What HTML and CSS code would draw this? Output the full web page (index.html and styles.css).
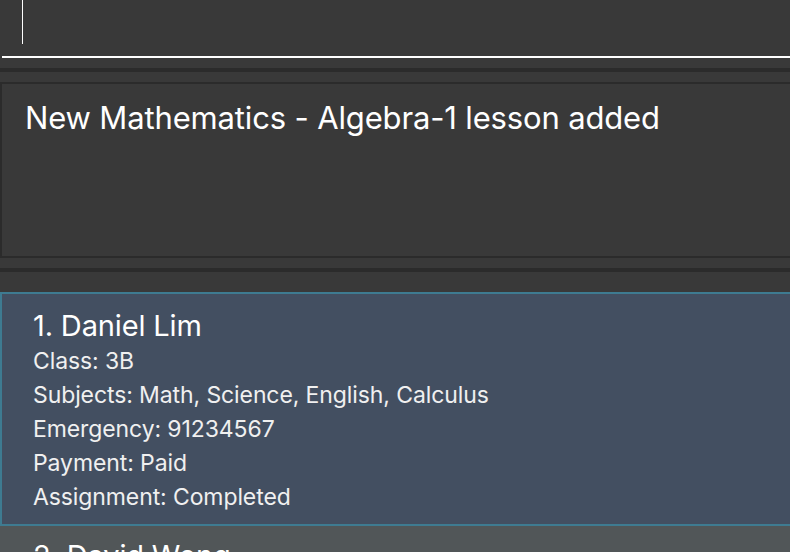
FILE: index.html
```html
<!DOCTYPE html>
<html>
<head>
<meta charset="utf-8">
<link rel="stylesheet" href="styles.css">
</head>
<body>
<div class="app">
  <div class="command">
    <div class="command-input"><span class="caret"></span></div>
  </div>
  <div class="gap10"></div>
  <div class="band"></div>
  <div class="gap10"></div>
  <div class="result">
    <div class="result-text">New Mathematics - Algebra-1 lesson added</div>
  </div>
  <div class="gap10"></div>
  <div class="band"></div>
  <div class="gap20"></div>
  <div class="list">
    <div class="card selected">
      <div class="card-title">1. Daniel Lim</div>
      <div class="card-line">Class: 3B</div>
      <div class="card-line">Subjects: Math, Science, English, Calculus</div>
      <div class="card-line">Emergency: 91234567</div>
      <div class="card-line">Payment: Paid</div>
      <div class="card-line">Assignment: Completed</div>
    </div>
    <div class="card">
      <div class="card-title">2. David Wong</div>
    </div>
  </div>
</div>
</body>
</html>
```
FILE: styles.css
```css
html, body {
  margin: 0;
  padding: 0;
  background: #393939;
  overflow: hidden;
  height: 552px;
}
body {
  font-family: Inter, "Noto Sans", sans-serif;
  color: #ffffff;
}
.app {
  display: flex;
  flex-direction: column;
  width: 790px;
}
.command {
  height: 58px;
  padding-left: 2px;
}
.command-input {
  height: 56px;
  border-bottom: 2px solid #ffffff;
  padding-left: 20px;
}
.caret {
  display: block;
  width: 1px;
  height: 44px;
  background: #ffffff;
}
.gap10 { height: 10px; flex: none; }
.gap20 { height: 20px; flex: none; }
.band {
  height: 4px;
  flex: none;
  background: #2b2b2b;
}
.result {
  height: 156px;
  flex: none;
  border: 2px solid #2b2b2b;
  border-right: none;
  padding: 16px 0 0 23px;
}
.result-text {
  font-size: 31px;
  line-height: 36px;
  letter-spacing: -0.15px;
}
.list {
  display: flex;
  flex-direction: column;
}
.card {
  background: #515658;
  padding: 12px 0 0 33px;
  color: #ffffff;
}
.card.selected {
  background: #434f61;
  border: 2px solid #3e7b91;
  border-right: none;
  padding: 14px 0 10px 31px;
}
.card-title {
  font-size: 29px;
  line-height: 36px;
  letter-spacing: -0.15px;
}
.card-line {
  font-size: 23px;
  line-height: 34px;
  letter-spacing: -0.1px;
  color: #f0f0f0;
}
```
